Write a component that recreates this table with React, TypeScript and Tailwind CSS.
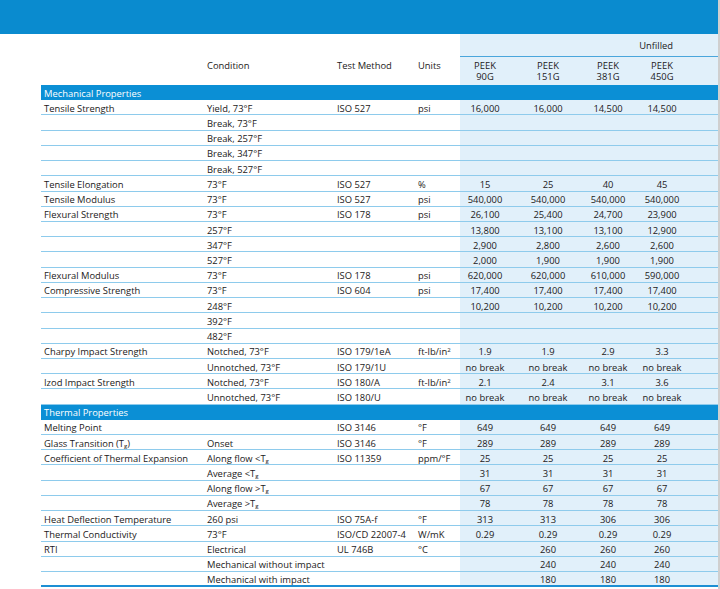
import React from "react";

type Row = {
  prop?: React.ReactNode;
  cond?: React.ReactNode;
  method?: string;
  units?: React.ReactNode;
  vals?: string[];
  section?: string;
};

const Tg = ({ pre }: { pre: string }) => (
  <span>
    {pre}T<sub className="text-[6px] relative top-[1px]">g</sub>
  </span>
);

const ftlb = (
  <span>
    ft-lb/in<sup className="text-[6px]">2</sup>
  </span>
);

const rows: Row[] = [
  { section: "Mechanical Properties" },
  { prop: "Tensile Strength", cond: "Yield, 73°F", method: "ISO 527", units: "psi", vals: ["16,000", "16,000", "14,500", "14,500"] },
  { cond: "Break, 73°F" },
  { cond: "Break, 257°F" },
  { cond: "Break, 347°F" },
  { cond: "Break, 527°F" },
  { prop: "Tensile Elongation", cond: "73°F", method: "ISO 527", units: "%", vals: ["15", "25", "40", "45"] },
  { prop: "Tensile Modulus", cond: "73°F", method: "ISO 527", units: "psi", vals: ["540,000", "540,000", "540,000", "540,000"] },
  { prop: "Flexural Strength", cond: "73°F", method: "ISO 178", units: "psi", vals: ["26,100", "25,400", "24,700", "23,900"] },
  { cond: "257°F", vals: ["13,800", "13,100", "13,100", "12,900"] },
  { cond: "347°F", vals: ["2,900", "2,800", "2,600", "2,600"] },
  { cond: "527°F", vals: ["2,000", "1,900", "1,900", "1,900"] },
  { prop: "Flexural Modulus", cond: "73°F", method: "ISO 178", units: "psi", vals: ["620,000", "620,000", "610,000", "590,000"] },
  { prop: "Compressive Strength", cond: "73°F", method: "ISO 604", units: "psi", vals: ["17,400", "17,400", "17,400", "17,400"] },
  { cond: "248°F", vals: ["10,200", "10,200", "10,200", "10,200"] },
  { cond: "392°F" },
  { cond: "482°F" },
  { prop: "Charpy Impact Strength", cond: "Notched, 73°F", method: "ISO 179/1eA", units: ftlb, vals: ["1.9", "1.9", "2.9", "3.3"] },
  { cond: "Unnotched, 73°F", method: "ISO 179/1U", vals: ["no break", "no break", "no break", "no break"] },
  { prop: "Izod Impact Strength", cond: "Notched, 73°F", method: "ISO 180/A", units: ftlb, vals: ["2.1", "2.4", "3.1", "3.6"] },
  { cond: "Unnotched, 73°F", method: "ISO 180/U", vals: ["no break", "no break", "no break", "no break"] },
  { section: "Thermal Properties" },
  { prop: "Melting Point", method: "ISO 3146", units: "°F", vals: ["649", "649", "649", "649"] },
  { prop: <span>Glass Transition (<Tg pre="" />)</span>, cond: "Onset", method: "ISO 3146", units: "°F", vals: ["289", "289", "289", "289"] },
  { prop: "Coefficient of Thermal Expansion", cond: <Tg pre="Along flow <" />, method: "ISO 11359", units: "ppm/°F", vals: ["25", "25", "25", "25"] },
  { cond: <Tg pre="Average <" />, vals: ["31", "31", "31", "31"] },
  { cond: <Tg pre="Along flow >" />, vals: ["67", "67", "67", "67"] },
  { cond: <Tg pre="Average >" />, vals: ["78", "78", "78", "78"] },
  { prop: "Heat Deflection Temperature", cond: "260 psi", method: "ISO 75A-f", units: "°F", vals: ["313", "313", "306", "306"] },
  { prop: "Thermal Conductivity", cond: "73°F", method: "ISO/CD 22007-4", units: "W/mK", vals: ["0.29", "0.29", "0.29", "0.29"] },
  { prop: "RTI", cond: "Electrical", method: "UL 746B", units: "°C", vals: ["", "260", "260", "260"] },
  { cond: "Mechanical without impact", vals: ["", "240", "240", "240"] },
  { cond: "Mechanical with impact", vals: ["", "180", "180", "180"] },
];

// data column widths (centres at ~485, 548, 608, 662)
const colW = ["w-[50px]", "w-[76px]", "w-[44px]", "w-[64px]"];

function DataCells({ vals }: { vals?: string[] }) {
  return (
    <div className="flex self-stretch w-[258px] items-center pt-[3px] bg-[#e1f0fa]">
      {colW.map((w, i) => (
        <div key={i} className={`${w} flex justify-center whitespace-nowrap`}>
          {vals ? vals[i] : ""}
        </div>
      ))}
    </div>
  );
}

export default function App() {
  return (
    <div
      className="w-[720px] h-[589px] overflow-hidden bg-[#cfcfcf] text-[9.4px] text-[#1c1a1a]"
      style={{ fontFamily: '"Open Sans", "Noto Sans", sans-serif' }}
    >
      <div className="w-[718px] h-full bg-white">
        <div className="h-[34px] bg-[#0a8bcf]" />

        {/* header */}
        <div className="flex h-[51px]">
          <div className="flex w-[460px] pl-[41px] pt-[26px] leading-[11px]">
            <div className="w-[166px]" />
            <div className="w-[130px]">Condition</div>
            <div className="w-[81px]">Test Method</div>
            <div className="w-[42px]">Units</div>
          </div>
          <div className="w-[258px] bg-[#e1f0fa]">
            <div className="h-[23px] border-b border-[#4aa6dc] flex items-center justify-end pr-[45px] pt-[2px]">
              Unfilled
            </div>
            <div className="flex pt-[3px]">
              {[
                ["PEEK", "90G"],
                ["PEEK", "151G"],
                ["PEEK", "381G"],
                ["PEEK", "450G"],
              ].map((h, i) => (
                <div key={i} className={`${colW[i]} flex flex-col items-center leading-[11px]`}>
                  <span>{h[0]}</span>
                  <span>{h[1]}</span>
                </div>
              ))}
            </div>
          </div>
        </div>

        {/* body */}
        <div className="ml-[41px] w-[677px]">
          {rows.map((r, i) =>
            r.section ? (
              <div
                key={i}
                className="h-[15.23px] bg-[#0b8fd5] text-white flex items-center pl-[3px] pt-[2px] whitespace-nowrap"
              >
                {r.section}
              </div>
            ) : (
              <div
                key={i}
                className={`flex h-[15.23px] items-center whitespace-nowrap ${
                  i === rows.length - 1 ? "border-b-2 border-[#1d8fd3]" : "border-b border-[#8ecbec]"
                }`}
              >
                <div className="flex pt-[3px]">
                  <div className="w-[166px] pl-[3px]">{r.prop}</div>
                  <div className="w-[130px]">{r.cond}</div>
                  <div className="w-[81px]">{r.method}</div>
                  <div className="w-[42px]">{r.units}</div>
                </div>
                <DataCells vals={r.vals} />
              </div>
            )
          )}
        </div>
      </div>
    </div>
  );
}
